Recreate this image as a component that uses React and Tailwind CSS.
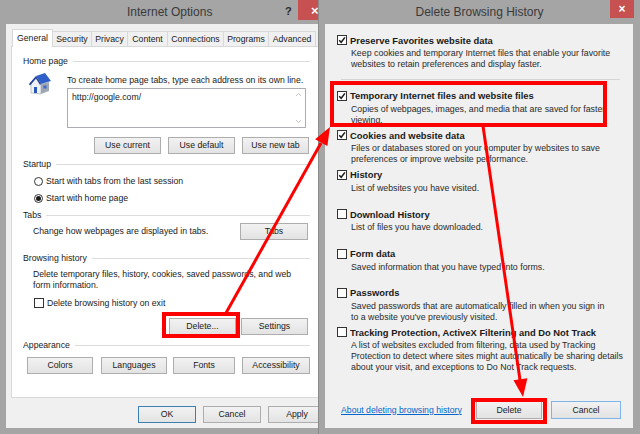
import React from 'react'

const Btn = ({ children, className = '', blue = false }) => (
  <div
    className={`h-[17px] shrink-0 flex items-center justify-center border ${
      blue ? 'border-[#3c7fb1]' : 'border-[#adadad]'
    } bg-linear-to-b from-[#f2f2f2] to-[#e3e3e3] text-[#1a1a1a] whitespace-nowrap ${className}`}
  >
    {children}
  </div>
)

const Group = ({ label, className = '' }) => (
  <div className={`flex items-center gap-[5px] h-[11px] w-[287px] ${className}`}>
    <span>{label}</span>
    <div className="flex-1 h-px bg-[#dcdcdc]" />
  </div>
)

const Check = ({ checked }) => (
  <div className="w-[10px] h-[10px] shrink-0 border border-[#333] bg-white flex items-center justify-center">
    {checked && (
      <svg width="8" height="8" viewBox="0 0 8 8">
        <path d="M1.2 4.2 L3.2 6.3 L6.9 1.4" fill="none" stroke="#1a1a1a" strokeWidth="1.5" />
      </svg>
    )}
  </div>
)

const Radio = ({ checked }) => (
  <div className="w-[9px] h-[9px] shrink-0 rounded-full border border-[#333] bg-white flex items-center justify-center">
    {checked && <div className="w-[5px] h-[5px] rounded-full bg-[#1a1a1a]" />}
  </div>
)

const House = () => (
  <svg width="23" height="24" viewBox="0 0 23 24">
    <polygon points="3,12 8,6 13,12 13,22 3,21" fill="#eef2f6" stroke="#9aa4ae" strokeWidth="0.6" />
    <polygon points="13,12 21,10 21,19 13,22" fill="#9ea7b2" />
    <polygon points="8,4 17,1 23,9 13,12" fill="#2f5fc9" />
    <polygon points="1,12 8,4 13,12 12,13 8,6.5 2,13.5" fill="#1d3d9a" />
    <rect x="6" y="15" width="3" height="6" fill="#2a58b8" />
    <rect x="15.5" y="13.5" width="3" height="3" fill="#3d6bc9" />
  </svg>
)

const Item = ({ checked, title, lines, className = '' }) => (
  <div className={`flex flex-col mb-[3.4px] min-h-[36px] ${className}`}>
    <div className="flex items-center gap-[3px] h-[12px]">
      <Check checked={checked} />
      <span className="font-bold text-[9.4px] whitespace-nowrap">{title}</span>
    </div>
    <div className="mt-[2px] pl-[14px] leading-[11px] text-[8.8px] text-[#2a2a2a] whitespace-nowrap">
      {lines.map((l, i) => (
        <div key={i}>{l}</div>
      ))}
    </div>
  </div>
)

const tabs = [
  ['Security', 'w-[40px]'],
  ['Privacy', 'w-[37px]'],
  ['Content', 'w-[41px]'],
  ['Connections', 'w-[57px]'],
  ['Programs', 'w-[46px]'],
  ['Advanced', 'w-[48px]'],
]

const InternetOptions = () => (
  <div className="w-[318px] h-full shrink-0 overflow-hidden bg-[#a5a5a5]">
    <div className="w-[332px] h-full flex flex-col">
      {/* Title bar */}
      <div className="h-[24px] flex items-start whitespace-nowrap">
        <span className="ml-[127px] w-[150px] mt-[4px] text-[12px] leading-[16px] text-[#3a3a3a]">Internet Options</span>
        <span className="ml-[8px] mt-[4px] text-[11px] font-bold leading-[14px] text-[#2a2a2a]">?</span>
        <div className="ml-[6px] w-[34px] h-[20px] bg-[#c75050] flex items-center justify-center text-white text-[13px] font-bold">
          ×
        </div>
      </div>

      {/* Client */}
      <div className="ml-[6px] mb-[6px] flex-1 bg-[#f0f0f0] flex flex-col">
        {/* Tabs */}
        <div className="mt-[5px] ml-[6px] h-[18px] flex items-end whitespace-nowrap">
          <div className="relative z-10 w-[41px] h-[18px] bg-white border border-b-0 border-[#d9d9d9] flex items-center justify-center">
            General
          </div>
          {tabs.map(([t, w]) => (
            <div
              key={t}
              className={`${w} h-[15px] mb-px -ml-px border border-b-0 border-[#d9d9d9] bg-[#f0f0f0] flex items-center justify-center`}
            >
              {t}
            </div>
          ))}
        </div>

        {/* Panel */}
        <div className="-mt-px ml-[5px] w-[330px] h-[352px] bg-white border border-[#d9d9d9] pl-[11px] flex flex-col">
          <Group label="Home page" className="mt-[9px]" />
          <div className="mt-[5px] flex">
            <div className="ml-[5px] w-[22px]">
              <House />
            </div>
            <div className="ml-[17px] flex flex-col">
              <div className="mt-[2.5px] h-[11px] leading-[11px]">
                To create home page tabs, type each address on its own line.
              </div>
              <div className="mt-[2.5px] w-[239px] h-[40px] border border-[#abadb3] bg-white flex">
                <div className="flex-1 pl-[4px] pt-[3px] leading-[11px]">http://google.com/</div>
                <div className="w-[13px] flex flex-col justify-between items-center py-[3px]">
                  <svg width="7" height="5" viewBox="0 0 7 5">
                    <path d="M1 4 L3.5 1.3 L6 4" fill="none" stroke="#c4c4c4" strokeWidth="1" />
                  </svg>
                  <svg width="7" height="5" viewBox="0 0 7 5">
                    <path d="M1 1 L3.5 3.7 L6 1" fill="none" stroke="#c4c4c4" strokeWidth="1" />
                  </svg>
                </div>
              </div>
            </div>
          </div>
          <div className="mt-[9px] ml-[71px] flex gap-[7px]">
            <Btn className="w-[67px]">Use current</Btn>
            <Btn className="w-[67px]">Use default</Btn>
            <Btn className="w-[67px]">Use new tab</Btn>
          </div>

          <Group label="Startup" className="mt-[4.5px]" />
          <div className="mt-[6px] ml-[11px] h-[11px] flex items-center gap-[3px]">
            <Radio />
            <span>Start with tabs from the last session</span>
          </div>
          <div className="mt-[6px] ml-[11px] h-[11px] flex items-center gap-[3px]">
            <Radio checked />
            <span>Start with home page</span>
          </div>

          <Group label="Tabs" className="mt-[6px]" />
          <div className="mt-[2.5px] w-[285px] pl-[10px] flex items-center justify-between">
            <span>Change how webpages are displayed in tabs.</span>
            <Btn className="w-[68px]">Tabs</Btn>
          </div>

          <Group label="Browsing history" className="mt-[12.5px]" />
          <div className="mt-[5px] ml-[10px] leading-[11px]">
            <div>Delete temporary files, history, cookies, saved passwords, and web</div>
            <div>form information.</div>
          </div>
          <div className="mt-[7px] ml-[11px] h-[11px] flex items-center gap-[3px]">
            <Check />
            <span>Delete browsing history on exit</span>
          </div>
          <div className="mt-[9.5px] ml-[146px] flex gap-[5px]">
            <Btn className="w-[67px]">Delete...</Btn>
            <Btn className="w-[67px]">Settings</Btn>
          </div>

          <Group label="Appearance" className="mt-[4.5px]" />
          <div className="mt-[6.5px] ml-[4px] flex">
            <Btn className="w-[66px]">Colors</Btn>
            <Btn className="ml-[8px] w-[66px]">Languages</Btn>
            <Btn className="ml-[6px] w-[62px]">Fonts</Btn>
            <Btn className="ml-[7px] w-[68px]">Accessibility</Btn>
          </div>
        </div>

        {/* Dialog buttons */}
        <div className="mt-[8px] ml-[132px] flex gap-[7px]">
          <Btn blue className="w-[58px]">OK</Btn>
          <Btn className="w-[58px]">Cancel</Btn>
          <Btn className="w-[58px]">Apply</Btn>
        </div>
      </div>
    </div>
  </div>
)

const DeleteHistory = () => (
  <div className="w-[322px] h-full shrink-0 bg-[#a5a5a5] border-l border-[#8a8a8a] flex flex-col">
    <div className="h-[24px] grid grid-cols-[24px_1fr_24px] pl-[6px] pr-[6px] items-start">
      <div />
      <span className="mt-[4px] text-center text-[12px] leading-[16px] text-[#3a3a3a] whitespace-nowrap">
        Delete Browsing History
      </span>
      <div className="h-[18px] bg-[#c75050] flex items-center justify-center text-white text-[12px] font-bold">
        ×
      </div>
    </div>
    <div className="ml-[6px] mr-[7px] mb-[6px] flex-1 bg-[#f0f0f0] pl-[12px] pr-[12px] flex flex-col">
      <Item
        className="mt-[10px]"
        checked
        title="Preserve Favorites website data"
        lines={[
          'Keep cookies and temporary Internet files that enable your favorite',
          'websites to retain preferences and display faster.',
        ]}
      />
      <div className="mt-[5.6px] ml-[4px] w-[279px] h-px bg-[#d6d6d6]" />
      <Item
        className="mt-[10px]"
        checked
        title="Temporary Internet files and website files"
        lines={['Copies of webpages, images, and media that are saved for faster', 'viewing.']}
      />
      <Item
        checked
        title="Cookies and website data"
        lines={[
          'Files or databases stored on your computer by websites to save',
          'preferences or improve website performance.',
        ]}
      />
      <Item checked title="History" lines={['List of websites you have visited.']} />
      <Item title="Download History" lines={['List of files you have downloaded.']} />
      <Item title="Form data" lines={['Saved information that you have typed into forms.']} />
      <Item
        title="Passwords"
        lines={[
          'Saved passwords that are automatically filled in when you sign in',
          "to a website you've previously visited.",
        ]}
      />
      <Item
        title="Tracking Protection, ActiveX Filtering and Do Not Track"
        lines={[
          'A list of websites excluded from filtering, data used by Tracking',
          'Protection to detect where sites might automatically be sharing details',
          'about your visit, and exceptions to Do Not Track requests.',
        ]}
      />
      <div className="mt-auto mb-[9px] h-[18px] flex items-center">
        <span className="ml-[4px] text-[#0066cc] underline">About deleting browsing history</span>
        <div className="flex-1" />
        <Btn className="w-[66px] h-[18px]">Delete</Btn>
        <Btn blue className="ml-[9px] w-[70px] h-[18px] border-[#7eb4ea]">Cancel</Btn>
      </div>
    </div>
  </div>
)

export default function App() {
  return (
    <div className="relative w-[640px] h-[434px] overflow-hidden flex font-['Liberation_Sans',Arial,sans-serif] text-[8.7px] leading-[11px] text-[#1a1a1a]">
      <InternetOptions />
      <DeleteHistory />

      {/* red annotations */}
      <svg className="absolute inset-0 pointer-events-none" width="640" height="434" viewBox="0 0 640 434">
        <g fill="none" stroke="#ff0000" strokeWidth="4">
          <rect x="164" y="314" width="74" height="22" />
          <rect x="332" y="83" width="273" height="42" />
          <rect x="473" y="400" width="72" height="22" />
        </g>
        <g stroke="#ff0000" strokeWidth="3">
          <line x1="226" y1="313" x2="321" y2="143" />
          <line x1="483" y1="126" x2="520" y2="380" />
        </g>
        <g fill="#ff0000">
          <polygon points="330,127 327.4,146.1 315.1,139.3" />
          <polygon points="523,397 527.4,378.2 513.5,380.2" />
        </g>
      </svg>
    </div>
  )
}
